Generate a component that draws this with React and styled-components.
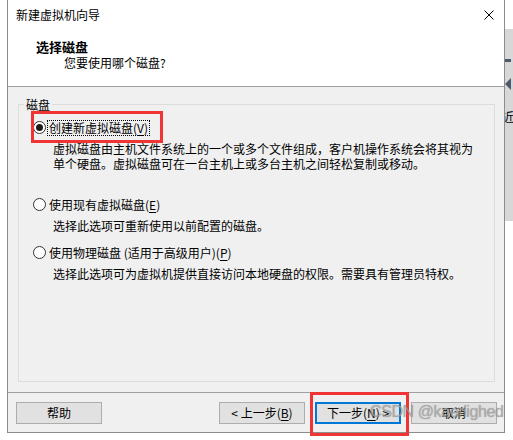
import React from "react";
import styled, { createGlobalStyle } from "styled-components";

const GlobalStyle = createGlobalStyle`
  html, body {
    margin: 0;
    background: #ffffff;
  }
  body {
    font-family: "Noto Sans CJK SC", "Microsoft YaHei", sans-serif;
    font-size: 12px;
    color: #000000;
  }
`;

const Page = styled.div`
  display: flex;
  width: 513px;
  height: 440px;
  padding-left: 7px;
  box-sizing: border-box;
  overflow: hidden;
`;

const Window = styled.div`
  position: relative;
  display: flex;
  flex-direction: column;
  flex-shrink: 0;
  width: 498px;
  height: 433px;
  box-sizing: border-box;
  border: 1px solid #8c8c8c;
  border-top: none;
  background: #f0f0f0;
`;

const TitleBar = styled.div`
  display: flex;
  align-items: center;
  justify-content: space-between;
  height: 29px;
  padding: 0 10px 0 8px;
  background: #ffffff;
  line-height: 16px;
`;

const Header = styled.div`
  height: 58px;
  padding: 10px 0 0 28px;
  box-sizing: border-box;
  background: #ffffff;
  border-bottom: 1px solid #a0a0a0;
  line-height: 16px;
`;

const HeaderTitle = styled.div`
  font-size: 13px;
  font-weight: 700;
`;

const HeaderSub = styled.div`
  padding-left: 28px;
`;

const Body = styled.div`
  flex: 1;
  padding: 10px 9px 10px 10px;
  display: flex;
`;

const GroupBox = styled.fieldset`
  flex: 1;
  margin: 0;
  padding: 0;
  border: 1px solid #dcdcdc;
  min-width: 0;
`;

const Legend = styled.legend`
  margin-left: 5px;
  padding: 0 2px;
  line-height: 15px;
`;

const OptionList = styled.div`
  padding: 8px 0 0 14px;
`;

const Option = styled.div`
  margin-top: ${(p) => p.$gap}px;
`;

const RadioRow = styled.div`
  display: flex;
  align-items: center;
  height: 15px;
  line-height: 15px;
`;

const Radio = styled.span`
  position: relative;
  flex-shrink: 0;
  width: 13px;
  height: 13px;
  box-sizing: border-box;
  border: 1px solid #333333;
  border-radius: 50%;
  background: #ffffff;
  margin-right: 1px;

  ${(p) =>
    p.$checked &&
    `
    &::after {
      content: "";
      position: absolute;
      left: 2px;
      top: 2px;
      width: 7px;
      height: 7px;
      border-radius: 50%;
      background: #1a1a1a;
    }
  `}
`;

const Label = styled.span`
  padding: 0 1px;
  border: 1px dotted ${(p) => (p.$focused ? "#000000" : "transparent")};
  line-height: 14px;
  white-space: nowrap;
`;

const Key = styled.span`
  text-decoration: underline;
  text-underline-offset: 2px;
`;

const Description = styled.div`
  margin: 6px 0 0 20px;
  line-height: 15px;
  white-space: nowrap;
`;

const Footer = styled.div`
  display: flex;
  align-items: flex-start;
  height: 40px;
  box-sizing: border-box;
  padding: 9px 7px 0 8px;
  border-top: 1px solid #a0a0a0;
`;

const Spacer = styled.div`
  flex: 1;
`;

const ButtonGroup = styled.div`
  display: flex;
  gap: 10px;
`;

const Button = styled.button`
  width: 86px;
  height: 22px;
  padding: 0;
  box-sizing: border-box;
  font-family: inherit;
  font-size: 12px;
  line-height: 16px;
  color: #000000;
  background: #e1e1e1;
  border: ${(p) => (p.$default ? "2px solid #0078d7" : "1px solid #adadad")};
`;

const RedBox = styled.div`
  position: absolute;
  box-sizing: border-box;
  border: 3px solid #f03434;
  pointer-events: none;
`;

const Watermark = styled.div`
  position: absolute;
  left: 362px;
  top: 403px;
  font-family: "Liberation Sans", Arial, sans-serif;
  font-size: 16px;
  letter-spacing: -0.4px;
  color: rgba(175, 175, 175, 0.7);
  text-shadow: 0 0 1px rgba(70, 70, 70, 0.5);
  white-space: nowrap;
  pointer-events: none;
`;

const Strip = styled.div`
  display: flex;
  flex-direction: column;
  width: 8px;
  flex-shrink: 0;
`;

const StripBlank = styled.div`
  height: ${(p) => p.$h}px;
  background: #ffffff;
`;

const StripPanel = styled.div`
  height: 174px;
  background: #d7d7d7;
  display: flex;
  flex-direction: column;
  padding-top: 30px;
  gap: 16px;
`;

const StripDash = styled.div`
  width: 6px;
  height: 3px;
  background: #4a5a6a;
`;

const StripArrow = styled.div`
  width: 0;
  height: 0;
  border-top: 6px solid transparent;
  border-bottom: 6px solid transparent;
  border-right: 6px solid #4a5a6a;
`;

const StripGlyph = styled.div`
  font-size: 12px;
  line-height: 14px;
  margin-left: -3px;
  margin-top: 4px;
  overflow: hidden;
`;

const CloseIcon = () => (
  <svg width="10" height="10" viewBox="0 0 10 10">
    <path d="M0.5 0.5 L9.5 9.5 M9.5 0.5 L0.5 9.5" stroke="#000" strokeWidth="1" />
  </svg>
);

const options = [
  {
    id: "new",
    label: "创建新虚拟磁盘",
    key: "V",
    checked: true,
    gap: 0,
    text: [
      "虚拟磁盘由主机文件系统上的一个或多个文件组成，客户机操作系统会将其视为",
      "单个硬盘。虚拟磁盘可在一台主机上或多台主机之间轻松复制或移动。",
    ],
  },
  {
    id: "existing",
    label: "使用现有虚拟磁盘",
    key: "E",
    gap: 26,
    text: ["选择此选项可重新使用以前配置的磁盘。"],
  },
  {
    id: "physical",
    label: "使用物理磁盘 (适用于高级用户)",
    key: "P",
    gap: 12,
    text: ["选择此选项可为虚拟机提供直接访问本地硬盘的权限。需要具有管理员特权。"],
  },
];

const DiskOption = ({ label, keyChar, checked, gap, text }) => (
  <Option $gap={gap}>
    <RadioRow>
      <Radio $checked={checked} />
      <Label $focused={checked}>
        {label}(<Key>{keyChar}</Key>)
      </Label>
    </RadioRow>
    <Description>
      {text.map((line) => (
        <div key={line}>{line}</div>
      ))}
    </Description>
  </Option>
);

const App = () => (
  <>
    <GlobalStyle />
    <Page>
      <Window>
        <TitleBar>
          <span>新建虚拟机向导</span>
          <CloseIcon />
        </TitleBar>
        <Header>
          <HeaderTitle>选择磁盘</HeaderTitle>
          <HeaderSub>您要使用哪个磁盘?</HeaderSub>
        </Header>
        <Body>
          <GroupBox>
            <Legend>磁盘</Legend>
            <OptionList>
              {options.map((o) => (
                <DiskOption
                  key={o.id}
                  label={o.label}
                  keyChar={o.key}
                  checked={o.checked}
                  gap={o.gap}
                  text={o.text}
                />
              ))}
            </OptionList>
          </GroupBox>
        </Body>
        <Footer>
          <Button>帮助</Button>
          <Spacer />
          <ButtonGroup>
            <Button>&lt; 上一步(<Key>B</Key>)</Button>
            <Button $default>下一步(<Key>N</Key>) &gt;</Button>
            <Button>取消</Button>
          </ButtonGroup>
        </Footer>
        <RedBox style={{ left: 23, top: 111, width: 132, height: 32 }} />
        <RedBox style={{ left: 302, top: 392, width: 99, height: 44 }} />
        <Watermark>CSDN @kaerlighed</Watermark>
      </Window>
      <Strip>
        <StripBlank $h={31} />
        <StripPanel>
          <StripDash />
          <StripArrow />
          <StripGlyph>近</StripGlyph>
        </StripPanel>
        <StripBlank $h={235} />
      </Strip>
    </Page>
  </>
);

export default App;
